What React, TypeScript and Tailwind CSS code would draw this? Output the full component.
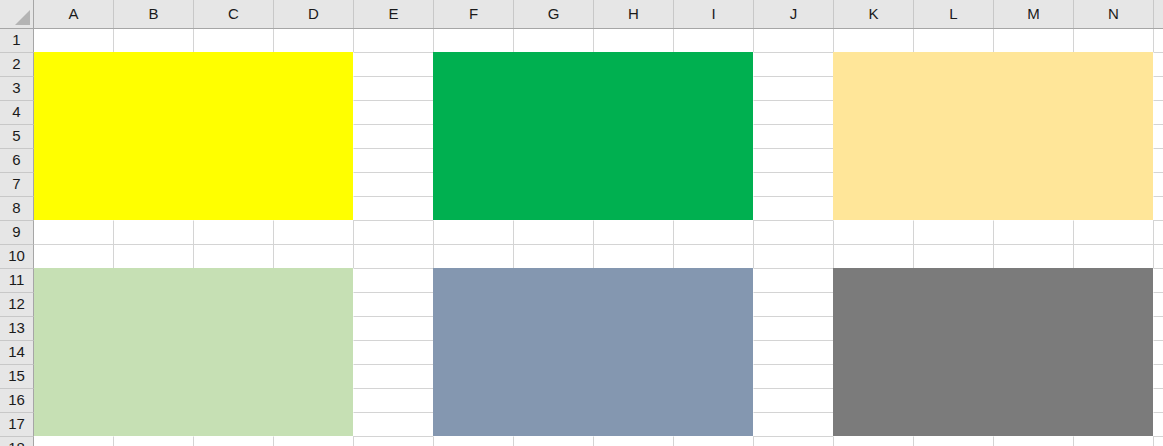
const COLS = ["A", "B", "C", "D", "E", "F", "G", "H", "I", "J", "K", "L", "M", "N", "O"];
const ROWS = Array.from({ length: 18 }, (_, i) => i + 1);

// fill classes written out in full so tailwind picks them up
const FILLS: Record<string, string> = {
    yellow: "bg-[#ffff00] border-[#ffff00]",
    green: "bg-[#00b050] border-[#00b050]",
    gold: "bg-[#ffe699] border-[#ffe699]",
    sage: "bg-[#c6e0b4] border-[#c6e0b4]",
    slate: "bg-[#8497b0] border-[#8497b0]",
    gray: "bg-[#7b7b7b] border-[#7b7b7b]",
};

// blocks: [firstRow, lastRow, firstCol, lastCol, fill]
const BLOCKS: [number, number, number, number, string][] = [
    [2, 8, 0, 3, "yellow"],
    [2, 8, 5, 8, "green"],
    [2, 8, 10, 13, "gold"],
    [11, 17, 0, 3, "sage"],
    [11, 17, 5, 8, "slate"],
    [11, 17, 10, 13, "gray"],
];

const fillAt = (row: number, col: number) => {
    const b = BLOCKS.find(([r1, r2, c1, c2]) => row >= r1 && row <= r2 && col >= c1 && col <= c2);
    return b ? b[4] : null;
};

const colWidth = (i: number) => (i === 0 ? "w-[79px]" : i === COLS.length - 1 ? "w-[10px] border-l" : "w-[80px] border-l");

const Cell = ({ row, col }: { row: number; col: number }) => {
    const fill = fillAt(row, col);
    const top = row > 1 ? "border-t" : "";
    const left = col > 0 ? "border-l" : "";
    const size = col === 0 ? "w-[79px]" : col === COLS.length - 1 ? "w-[10px]" : "w-[80px]";

    if (fill) {
        return <div className={`${size} shrink-0 ${top} ${left} ${FILLS[fill]}`} />;
    }

    // excel hides gridlines next to filled cells
    const topColor = row > 1 && fillAt(row - 1, col) ? "border-t-white" : "border-t-[#d4d4d4]";
    const leftColor = col > 0 && fillAt(row, col - 1) ? "border-l-white" : "border-l-[#d4d4d4]";

    return <div className={`${size} shrink-0 bg-white ${top} ${left} ${topColor} ${leftColor}`} />;
};

const App = () => {
    return (
        <div
            className="w-[1163px] h-[446px] overflow-hidden bg-white text-[15px] text-[#1a1a1a]"
            style={{ fontFamily: '"Liberation Sans", Arial, sans-serif' }}
        >
            {/* Column headers */}
            <div className="flex h-[29px] bg-[#e6e6e6] border-b border-[#a6a6a6]">
                <div className="relative w-[34px] shrink-0 border-r border-[#a6a6a6]">
                    <svg width="34" height="28" className="absolute inset-0">
                        <polygon points="30,10 30,25 15,25" fill="#b4b4b4" />
                    </svg>
                </div>
                {COLS.map((c, i) => (
                    <div
                        key={c}
                        className={`${colWidth(i)} shrink-0 border-[#c8c8c8] flex items-center justify-center pt-px`}
                    >
                        {i < COLS.length - 1 ? c : ""}
                    </div>
                ))}
            </div>

            {/* Rows */}
            {ROWS.map((r) => (
                <div key={r} className={`flex ${r === 1 ? "h-[23px]" : "h-[24px]"}`}>
                    <div
                        className={`w-[34px] shrink-0 bg-[#e6e6e6] border-r border-r-[#a6a6a6] ${
                            r > 1 ? "border-t border-t-[#c8c8c8]" : ""
                        } flex items-center justify-center`}
                    >
                        {r}
                    </div>
                    {COLS.map((_, i) => (
                        <Cell key={i} row={r} col={i} />
                    ))}
                </div>
            ))}
        </div>
    );
};

export default App;
